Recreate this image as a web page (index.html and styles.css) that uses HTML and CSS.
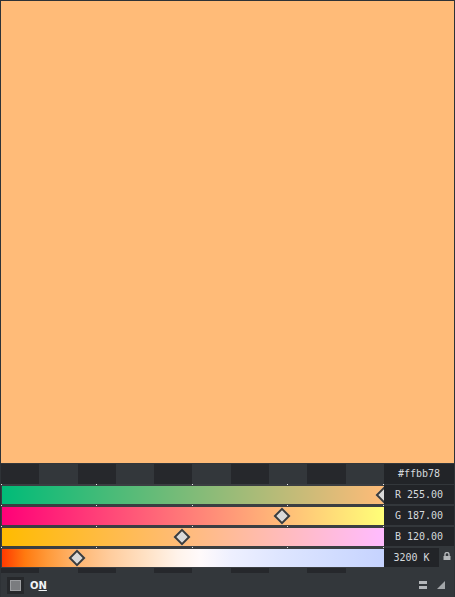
FILE: index.html
```html
<!DOCTYPE html>
<html>
<head>
<meta charset="utf-8">
<link rel="stylesheet" href="styles.css">
</head>
<body>
<div class="app">
  <div class="swatch"></div>
  <div class="panel">
    <div class="rows">
      <div class="stripes"></div>
      <div class="valcell"><div class="val hex">#ffbb78</div></div>

      <div class="track">
        <span class="dot d0"></span><span class="dot d1"></span><span class="dot d2"></span><span class="dot d3"></span><span class="dot d4"></span>
        <div class="bar bar-r"><span class="handle" style="left:100%"></span></div>
      </div>
      <div class="valcell"><div class="val">R 255.00</div></div>

      <div class="track">
        <span class="dot d0"></span><span class="dot d1"></span><span class="dot d2"></span><span class="dot d3"></span><span class="dot d4"></span>
        <div class="bar bar-g"><span class="handle" style="left:73.4%"></span></div>
      </div>
      <div class="valcell"><div class="val">G 187.00</div></div>

      <div class="track">
        <span class="dot d0"></span><span class="dot d1"></span><span class="dot d2"></span><span class="dot d3"></span><span class="dot d4"></span>
        <div class="bar bar-b"><span class="handle" style="left:47.2%"></span></div>
      </div>
      <div class="valcell"><div class="val">B 120.00</div></div>

      <div class="track">
        <span class="dot d0"></span><span class="dot d1"></span><span class="dot d2"></span><span class="dot d3"></span><span class="dot d4"></span>
        <div class="bar bar-k"><span class="handle" style="left:19.7%"></span></div>
      </div>
      <div class="valcell kcell">
        <div class="val kval">3200 K</div>
        <svg class="lock" width="8" height="8" viewBox="0 0 8 8">
          <path d="M2 4V2.5a2 2 0 0 1 4 0V4" fill="none" stroke="#b4b7ba" stroke-width="1.4"/>
          <rect x="0.5" y="4" width="7" height="4" fill="#b4b7ba"/>
        </svg>
      </div>

      <div class="stripes strip"></div>
      <div></div>
    </div>
    <div class="bottom">
      <div class="check"><div class="check-inner"></div></div>
      <span class="on">O<u>N</u></span>
      <div class="spacer"></div>
      <svg class="eq" width="8" height="8" viewBox="0 0 8 8">
        <rect x="0" y="0" width="8" height="3" fill="#b4b7ba"/>
        <rect x="0" y="5" width="8" height="3" fill="#b4b7ba"/>
      </svg>
      <svg class="grip" width="8" height="8" viewBox="0 0 8 8">
        <polygon points="8,0 8,8 0,8" fill="#a3a6a9"/>
      </svg>
    </div>
  </div>
</div>
</body>
</html>
```
FILE: styles.css
```css
html, body {
  margin: 0;
  padding: 0;
}
body {
  background: #2e3236;
  width: 455px;
  height: 597px;
  overflow: hidden;
  font-family: "DejaVu Sans Mono", monospace;
}
.app {
  padding: 1px 1px 0 1px;
  display: flex;
  flex-direction: column;
}
.swatch {
  height: 462px;
  background: #ffbb78;
}
.panel {
  background: #33373b;
  height: 134px;
  display: flex;
  flex-direction: column;
}
.rows {
  display: grid;
  grid-template-columns: 383px 70px;
  grid-template-rows: repeat(5, 21px) 5px;
}
.stripes {
  background: repeating-linear-gradient(to right,
    #26282c 0, #26282c 38.3px,
    #33373b 38.3px, #33373b 76.6px);
  margin-top: 1px;
}
.strip {
  margin-top: 0;
}
.track {
  position: relative;
  background: #3b3e42;
  padding: 2px 0 1px 1px;
  overflow: hidden;
}
.dot {
  position: absolute;
  top: 0;
  width: 1px;
  height: 1px;
  background: #e6e6e6;
}
.d0 { left: 0; }
.d1 { left: 95px; }
.d2 { left: 191px; }
.d3 { left: 286px; }
.d4 { left: 382px; }
.bar {
  position: relative;
  height: 18px;
}
.bar-r { background: linear-gradient(to right, #00bb78, #ffbb78); }
.bar-g { background: linear-gradient(to right, #ff0078, #ffff78); }
.bar-b { background: linear-gradient(to right, #ffbb00, #ffbbff); }
.bar-k {
  background: linear-gradient(to right,
    #ff3a00 0%,
    #ff7a10 6%,
    #ff9a3a 12%,
    #ffb46c 19%,
    #ffcc9c 28%,
    #ffe2c6 38%,
    #fff3ea 46%,
    #fffafb 52%,
    #eef0ff 60%,
    #dfe6ff 72%,
    #d2ddff 86%,
    #c6d3ff 100%);
}
.handle {
  position: absolute;
  top: 50%;
  width: 12px;
  height: 12px;
  box-sizing: border-box;
  background: #d9d9d9;
  border: 2px solid #3b3b3b;
  transform: translate(-50%, -50%) rotate(45deg);
}
.valcell {
  position: relative;
  z-index: 1;
}
.val {
  margin-top: 1px;
  height: 19px;
  background: #222428;
  color: #d5d9dd;
  font-size: 10px;
  line-height: 19px;
  text-align: center;
  white-space: pre;
}
.hex {
  height: 20px;
  line-height: 20px;
}
.kcell {
  display: flex;
  align-items: flex-start;
}
.kval {
  width: 55px;
}
.lock {
  margin: 5px 0 0 4px;
}
.bottom {
  height: 24px;
  display: flex;
  align-items: center;
  padding: 0 9px 0 6px;
}
.check {
  width: 17px;
  height: 17px;
  background: #26282b;
  display: flex;
  align-items: center;
  justify-content: center;
}
.check-inner {
  width: 11px;
  height: 11px;
  box-sizing: border-box;
  background: #7a7c7f;
  border: 1px solid #9c9ea1;
}
.on {
  margin-left: 6px;
  font-family: "DejaVu Sans", sans-serif;
  font-weight: bold;
  font-size: 10px;
  color: #f2f4f6;
}
.on u {
  text-decoration-thickness: 1px;
}
.spacer {
  flex: 1;
}
.eq {
  margin-right: 10px;
}
```
